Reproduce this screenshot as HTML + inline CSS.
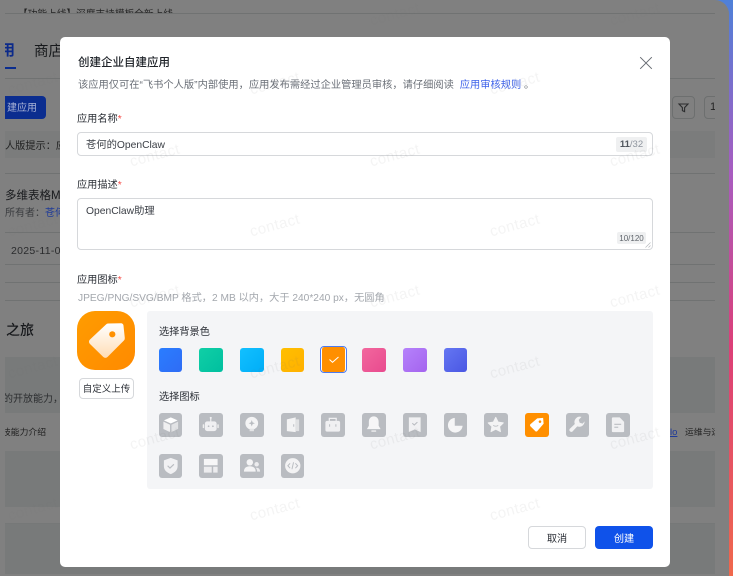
<!DOCTYPE html>
<html lang="zh"><head><meta charset="utf-8"><style>
*{box-sizing:border-box}
html,body{margin:0;padding:0}
body{width:733px;height:576px;overflow:hidden;position:relative;background:#808080;font-family:"Liberation Sans","Noto Sans CJK SC",sans-serif;color:#1f2329}
#r{position:absolute;left:0;top:0;width:733px;height:576px;overflow:hidden;filter:blur(.3px)}
.a{position:absolute;white-space:nowrap}
.strip{position:absolute;left:0;top:0;width:733px;height:576px;background:linear-gradient(180deg,#4f80d8 0%,#a85cc0 30%,#dc3f78 60%,#f0684c 100%)}
.page{position:absolute;left:0;top:0;width:729px;height:576px;background:#808080;border-top-right-radius:14px}
.clip{position:absolute;left:5px;top:0;width:710px;height:576px;overflow:hidden}
.ln{position:absolute;left:0;width:710px;height:1px;background:#707272}
.bd{position:absolute;left:0;width:710px;background:#787a7a}
.bt{color:#17191c}
.dlg{position:absolute;left:60px;top:37px;width:610px;height:530px;background:#fff;border-radius:5px}
.lab{font-size:10.2px;line-height:14px;color:#2b2f36}
.lab i{color:#f54a45;font-style:normal}
.box{position:absolute;border:1px solid #d6d8db;border-radius:4px;background:#fff}
.sw{position:absolute;width:23.5px;height:23.5px;border-radius:3px;top:348px}
.ic{position:absolute;width:23.5px;height:23.5px;border-radius:3px;background:#b9bcc1}
.ic svg{position:absolute;left:0;top:0;width:23.5px;height:23.5px}
.wm{position:absolute;font-size:15px;line-height:18px;width:60px;text-align:center;color:rgba(120,120,120,.08);transform:rotate(-15deg);letter-spacing:.4px}
</style></head><body><div id="r">
<div class="strip"></div>
<div class="page"></div>
<div class="clip">
 <div class="a bt" style="left:13px;top:8px;font-size:9.7px;line-height:14px;color:#222;height:5px;overflow:hidden">【功能上线】深度支持模板全新上线</div>
 <div class="ln" style="top:13px"></div>
 <div class="a" style="left:-5px;top:42px;font-size:15px;line-height:18px;color:#0c2a8a;font-weight:700;width:15px;text-align:right">用</div>
 <div class="a bt" style="left:29px;top:43px;font-size:14.5px;line-height:18px">商店</div>
 <div class="a" style="left:0;top:67px;width:11px;height:2px;background:#0b2d8f"></div>
 <div class="ln" style="top:78px"></div>
 <div class="a" style="left:-10px;top:96px;width:51px;height:23px;background:#0b2d8f;border-radius:4px"></div>
 <div class="a" style="left:2px;top:101px;font-size:10px;line-height:15px;color:#a9b3d6">建应用</div>
 <div class="bd" style="top:131px;height:27px;background:#7b7c7c"></div>
 <div class="a bt" style="left:0;top:139px;font-size:10.2px;line-height:15px;color:#222">人版提示：应</div>
 <div class="ln" style="top:173px"></div>
 <div class="a bt" style="left:0;top:188px;font-size:11.5px;line-height:16px">多维表格M</div>
 <div class="a" style="left:0;top:207px;font-size:10px;line-height:14px;color:#3a3c3f">所有者：<span style="color:#1e3a99">苍何</span></div>
 <div class="ln" style="top:232px"></div>
 <div class="a" style="left:6px;top:244px;font-size:10.5px;line-height:14px;color:#2a2b2d;letter-spacing:.3px">2025-11-08</div>
 <div class="ln" style="top:264px"></div>
 <div class="ln" style="top:282px"></div>
 <div class="ln" style="top:300px"></div>
 <div class="a bt" style="left:1px;top:321px;font-size:14px;line-height:18px;font-weight:500">之旅</div>
 <div class="bd" style="top:357px;height:56px"></div>
 <div class="a" style="left:-2px;top:392px;font-size:10px;line-height:15px;color:#2c2e30">的开放能力，</div>
 <div class="a" style="left:-3px;top:426px;font-size:8.8px;line-height:13px;color:#222">技能力介绍</div>
 <div class="bd" style="top:451px;height:56px"></div>
 <div class="ln" style="top:523px;background:#767878"></div>
 <div class="bd" style="top:524px;height:50px"></div>
 <div class="a" style="left:667px;top:96px;width:23px;height:23px;border:1px solid #6d6f6f;border-radius:4px"></div>
 <svg class="a" style="left:667px;top:96px" width="23" height="23" viewBox="0 0 23 23"><path d="M7 8h9l-3.4 3.6v4l-2.2-1v-3L7 8z" fill="none" stroke="#2c2d2e" stroke-width="1.1"/></svg>
 <div class="a" style="left:699px;top:96px;width:20px;height:23px;border:1px solid #6d6f6f;border-radius:4px"></div>
 <div class="a" style="left:705px;top:100px;font-size:11px;line-height:15px;color:#222">1</div>
 <div class="a" style="left:665px;top:426px;font-size:9.500px;line-height:13px;color:#1e3a99;text-decoration:underline">lo</div>
 <div class="a" style="left:680px;top:426px;font-size:8.800px;line-height:13px;color:#222">运维与运</div>
</div>

<div class="dlg"></div>
<div class="a" style="left:78px;top:55px;font-size:11.5px;line-height:16px;color:#1f2329;font-weight:500">创建企业自建应用</div>
<div class="a" style="left:78px;top:79px;font-size:10.25px;line-height:14px;color:#6b7078">该应用仅可在“飞书个人版”内部使用，应用发布需经过企业管理员审核，请仔细阅读&nbsp;<span style="color:#3f63ea;margin-left:3px">应用审核规则</span>&nbsp;。</div>
<svg class="a" style="left:639px;top:56px" width="14" height="14" viewBox="0 0 14 14"><path d="M1.2 1.2L12.800 12.800M12.800 1.200L1.200 12.800" stroke="#666b72" stroke-width="1" fill="none"/></svg>

<div class="a lab" style="left:77px;top:113px">应用名称<i>*</i></div>
<div class="box" style="left:77px;top:132px;width:576px;height:24px"></div>
<div class="a" style="left:86px;top:139px;font-size:10.3px;line-height:14px;color:#3a3e45">苍何的OpenClaw</div>
<div class="a" style="left:616px;top:137px;width:31px;height:15px;background:#eff0f1;border-radius:2px;font-size:9.500px;line-height:16px;text-align:center;color:#8f959e"><b style="color:#51565d">11</b>/32</div>

<div class="a lab" style="left:77px;top:179px">应用描述<i>*</i></div>
<div class="box" style="left:77px;top:198px;width:576px;height:52px"></div>
<div class="a" style="left:86px;top:205px;font-size:10.3px;line-height:14px;color:#3a3e45">OpenClaw助理</div>
<div class="a" style="left:617px;top:232px;width:29px;height:12px;background:#eff0f1;border-radius:2px;font-size:8px;line-height:13px;text-align:center;color:#60656c">10/120</div>
<svg class="a" style="left:644px;top:241px" width="7" height="7" viewBox="0 0 7 7"><path d="M1.500 6.500L6.500 1.500M4.500 6.500L6.500 4.500" stroke="#b5b8bc" stroke-width=".7"/></svg>

<div class="a lab" style="left:77px;top:274px">应用图标<i>*</i></div>
<div class="a" style="left:78px;top:292px;font-size:10.2px;line-height:14px;color:#a3a7ad">JPEG/PNG/SVG/BMP 格式，2 MB 以内，大于 240*240 px，无圆角</div>

<div class="a" style="left:77px;top:311px;width:58px;height:59px;border-radius:18px;background:linear-gradient(135deg,#ff9c00,#ff8a00)"></div>
<svg class="a" style="left:77px;top:311px" width="58" height="59" viewBox="0 0 58 59"><defs><linearGradient id="tg" x1="0" y1="0" x2="0" y2="1"><stop offset="0" stop-color="#ffffff"/><stop offset="1" stop-color="#ffdcb5"/></linearGradient></defs><path d="M31 12.500L44 12.300a2.500 2.500 0 0 1 2.500 2.500L47.800 27a3 3 0 0 1-1 2.600L30.500 46a3 3 0 0 1-4.200 0L13 33a3 3 0 0 1 0-4.500L29 13.500a3 3 0 0 1 2-1z" fill="url(#tg)"/><circle cx="35.300" cy="23.300" r="3.100" fill="#ff9000"/></svg>
<div class="a" style="left:79px;top:378px;width:55px;height:21px;border:1px solid #d6d8db;border-radius:4px;background:#fff;font-size:9.500px;line-height:21px;text-align:center;color:#2b2f36">自定义上传</div>

<div class="a" style="left:147px;top:311px;width:506px;height:178px;background:#f4f5f7;border-radius:3px"></div>
<div class="a lab" style="left:159px;top:326px">选择背景色</div>
<div class="sw" style="left:158.500px;background:linear-gradient(135deg,#2a7dff,#2f6cf5)"></div>
<div class="sw" style="left:199.200px;background:linear-gradient(135deg,#10cfa6,#00bf9f)"></div>
<div class="sw" style="left:240px;background:linear-gradient(135deg,#12c0ff,#00adf7)"></div>
<div class="sw" style="left:280.700px;background:linear-gradient(135deg,#ffbf00,#ffb000)"></div>
<div class="a" style="left:320px;top:345.500px;width:26.500px;height:27.500px;border:1.500px solid #4d7bf0;border-radius:4px;background:#fff"></div>
<div class="a" style="left:321.500px;top:347px;width:23.500px;height:24.500px;background:#ff8f00;border-radius:2.500px"></div>
<svg class="a" style="left:321.500px;top:347px" width="24" height="24" viewBox="0 0 24 24"><path d="M7.500 12.500l3 2.800 6-5.300" fill="none" stroke="#fff" stroke-width="1"/></svg>
<div class="sw" style="left:362px;background:linear-gradient(135deg,#f2679e,#e84a8e)"></div>
<div class="sw" style="left:403px;background:linear-gradient(135deg,#b582fb,#a463ee)"></div>
<div class="sw" style="left:443.700px;background:linear-gradient(135deg,#6476f2,#4a57e3)"></div>

<div class="a lab" style="left:159px;top:391px">选择图标</div>

<div class="ic" style="left:158.500px;top:413px"><svg viewBox="0 0 24 24"><path d="M12 4.500l7 3-7 3.200-7-3.200z" fill="#fff"/><path d="M4.500 8.800l6.800 3.200v7.500l-6.800-3.200z" fill="#f0f0f1"/><path d="M19.500 8.800l-6.800 3.200v7.500l6.800-3.200z" fill="#e2e3e5"/></svg></div>
<div class="ic" style="left:199.200px;top:413px"><svg viewBox="0 0 24 24"><rect x="6" y="8.500" width="12" height="10" rx="2.500" fill="#f0f0f2"/><rect x="11.400" y="5" width="1.200" height="4" fill="#f0f0f2"/><circle cx="12" cy="5" r="1.100" fill="#f0f0f2"/><rect x="3.800" y="11.500" width="1.500" height="4" rx=".7" fill="#eee"/><rect x="18.700" y="11.500" width="1.500" height="4" rx=".7" fill="#eee"/><circle cx="9.800" cy="13.500" r=".9" fill="#b9bcc1"/><circle cx="14.200" cy="13.500" r=".9" fill="#b9bcc1"/></svg></div>
<div class="ic" style="left:240px;top:413px"><svg viewBox="0 0 24 24"><circle cx="12" cy="10.500" r="6.500" fill="#f4f4f5"/><rect x="9.800" y="16" width="4.400" height="2.600" fill="#e4e5e7"/><path d="M12 7.200l.9 2.400 2.300.9-2.300.9-.9 2.400-.9-2.400-2.300-.9 2.300-.9z" fill="#b9bcc1"/></svg></div>
<div class="ic" style="left:280.700px;top:413px"><svg viewBox="0 0 24 24"><path d="M6 6.500l9-2v15l-9-1z" fill="#f3f3f4"/><path d="M15 6.500h3.500v12H15z" fill="#e0e1e3"/><rect x="12.500" y="11.500" width="1" height="2.500" fill="#b9bcc1"/></svg></div>
<div class="ic" style="left:321.300px;top:413px"><svg viewBox="0 0 24 24"><rect x="4.500" y="8" width="15" height="11" rx="1.800" fill="#f0f0f2"/><path d="M8.500 8V5.500h7V8" fill="none" stroke="#f0f0f2" stroke-width="1.300"/><rect x="8.300" y="11.500" width="1" height="2.500" fill="#b9bcc1"/><rect x="14.700" y="11.500" width="1" height="2.500" fill="#b9bcc1"/></svg></div>
<div class="ic" style="left:362px;top:413px"><svg viewBox="0 0 24 24"><path d="M12 3.500c3.500 0 5 2.800 5 5.500v4l2 3.500H5l2-3.500V9c0-2.700 1.500-5.500 5-5.500z" fill="#f6f6f7"/><rect x="9.500" y="17.800" width="5" height="1.300" rx=".6" fill="#f0f0f1"/></svg></div>
<div class="ic" style="left:403px;top:413px"><svg viewBox="0 0 24 24"><path d="M6 4.500h12v15l-6-2.800-6 2.800z" fill="#f1f1f3"/><path d="M9.500 10.500l2 1.800 3.200-3" fill="none" stroke="#b9bcc1" stroke-width="1.100"/></svg></div>
<div class="ic" style="left:443.700px;top:413px"><svg viewBox="0 0 24 24"><path d="M11 5v8h8a7.500 7.500 0 1 1-8-8z" fill="#f6f6f7"/></svg></div>
<div class="ic" style="left:484.400px;top:413px"><svg viewBox="0 0 24 24"><path d="M12 4.500l2.400 4.800 5.300.8-3.800 3.700.9 5.200-4.800-2.500-4.800 2.500.9-5.200-3.800-3.700 5.300-.8z" fill="#f3f3f4" stroke="#f3f3f4" stroke-linejoin="round"/><path d="M9.500 12.500c1 1.300 4 1.300 5 0" fill="none" stroke="#b9bcc1" stroke-width=".9"/></svg></div>
<div class="ic" style="left:525px;top:413px;background:#ff8f00"><svg viewBox="0 0 24 24"><path d="M5.500 11.500l7-6 6-.5.500 6-6.500 7.500a1.500 1.500 0 0 1-2 0l-5-5a1.500 1.500 0 0 1 0-2z" fill="#fff"/><circle cx="15.300" cy="8.800" r="1.300" fill="#ff8f00"/></svg></div>
<div class="ic" style="left:565.700px;top:413px"><svg viewBox="0 0 24 24"><path d="M19 8.500a5.500 5.500 0 0 1-7.500 5.200l-5 5.300a2 2 0 0 1-2.700-2.800l5.200-5A5.500 5.500 0 0 1 15.800 4L13 7l1 3 3 .8z" fill="#f3f3f4"/></svg></div>
<div class="ic" style="left:606.300px;top:413px"><svg viewBox="0 0 24 24"><path d="M6 5.500a1 1 0 0 1 1-1h7l4.500 4.500v9.500a1 1 0 0 1-1 1H7a1 1 0 0 1-1-1z" fill="#f1f1f3"/><rect x="8.500" y="11" width="7" height="1.100" fill="#b9bcc1"/><rect x="8.500" y="14" width="4" height="1.100" fill="#b9bcc1"/></svg></div>

<div class="ic" style="left:158.500px;top:454px"><svg viewBox="0 0 24 24"><path d="M12 4l7 2.500v6c0 4-3 6.500-7 8-4-1.500-7-4-7-8v-6z" fill="#f1f1f3"/><path d="M8.800 12l2.400 2.300 4-3.800" fill="none" stroke="#b9bcc1" stroke-width="1.200"/></svg></div>
<div class="ic" style="left:199.200px;top:454px"><svg viewBox="0 0 24 24"><rect x="5" y="5" width="14" height="6.500" fill="#f6f6f7"/><rect x="5" y="13" width="8" height="6" fill="#ececee"/><rect x="14.500" y="13" width="4.500" height="6" fill="#ececee"/></svg></div>
<div class="ic" style="left:240px;top:454px"><svg viewBox="0 0 24 24"><circle cx="10" cy="8.500" r="3.300" fill="#f4f4f5"/><path d="M4 18c0-3.800 2.500-5.500 6-5.500s6 1.700 6 5.500z" fill="#f4f4f5"/><circle cx="17" cy="10.500" r="2.300" fill="#ececee"/><path d="M17 14c2.200 0 3.500 1.500 3.500 4H17.500c0-1.500-.3-2.800-1.500-3.800z" fill="#ececee"/></svg></div>
<div class="ic" style="left:280.700px;top:454px"><svg viewBox="0 0 24 24"><circle cx="12" cy="12" r="7.800" fill="#f3f3f4"/><path d="M9.300 9.500L7 12l2.300 2.500M14.700 9.500L17 12l-2.300 2.500M12.800 8.500l-1.600 7" fill="none" stroke="#b9bcc1" stroke-width="1"/></svg></div>

<div class="a" style="left:528px;top:526px;width:58px;height:23px;border:1px solid #d6d8db;border-radius:4px;background:#fff;font-size:10.2px;line-height:25px;text-align:center;color:#2b2f36">取消</div>
<div class="a" style="left:595px;top:526px;width:58px;height:23px;border-radius:4px;background:#0f52ea;font-size:10.2px;line-height:27px;text-align:center;color:#fff">创建</div>

<div class="wm" style="left:365px;top:6px">contact</div><div class="wm" style="left:605px;top:6px">contact</div>
<div class="wm" style="left:3px;top:75px">contact</div><div class="wm" style="left:245px;top:75px">contact</div><div class="wm" style="left:485px;top:75px">contact</div>
<div class="wm" style="left:125px;top:147px">contact</div><div class="wm" style="left:365px;top:147px">contact</div><div class="wm" style="left:605px;top:147px">contact</div>
<div class="wm" style="left:3px;top:217px">contact</div><div class="wm" style="left:245px;top:217px">contact</div><div class="wm" style="left:485px;top:217px">contact</div>
<div class="wm" style="left:125px;top:288px">contact</div><div class="wm" style="left:365px;top:288px">contact</div><div class="wm" style="left:605px;top:288px">contact</div>
<div class="wm" style="left:3px;top:359px">contact</div><div class="wm" style="left:245px;top:359px">contact</div><div class="wm" style="left:485px;top:359px">contact</div>
<div class="wm" style="left:125px;top:430px">contact</div><div class="wm" style="left:365px;top:430px">contact</div><div class="wm" style="left:605px;top:430px">contact</div>
<div class="wm" style="left:3px;top:501px">contact</div><div class="wm" style="left:245px;top:501px">contact</div><div class="wm" style="left:485px;top:501px">contact</div>
</div></body></html>
